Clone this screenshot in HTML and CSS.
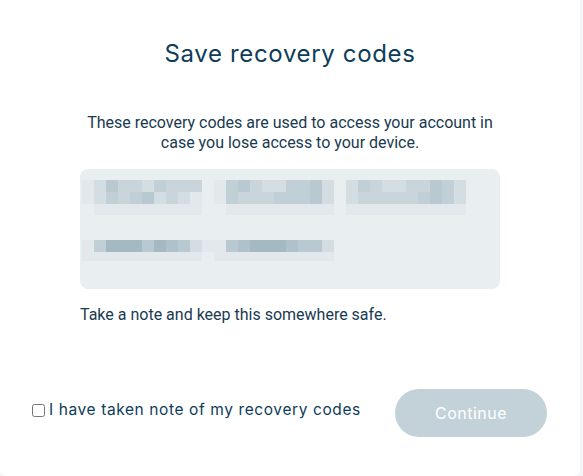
FILE: index.html
```html
<!DOCTYPE html>
<html lang="en">
<head>
<meta charset="utf-8">
<title>Save recovery codes</title>
<link rel="stylesheet" href="styles.css">
</head>
<body>
<div class="card">
  <h1 class="title">Save recovery codes</h1>
  <p class="desc">These recovery codes are used to access your account in<br>case you lose access to your device.</p>
  <div class="codes" aria-label="Recovery codes (hidden)">
    <div class="pix row-a">
      <i class="l1"></i><i class="l2"></i><i class="l5"></i><i class="l3"></i><i class="l3"></i><i class="l2"></i><i class="l4"></i><i class="l3"></i><i class="l3"></i><i class="l3"></i><i class="l0"></i><i class="l1"></i><i class="l4"></i><i class="l5"></i><i class="l3"></i><i class="l2"></i><i class="l2"></i><i class="l4"></i><i class="l4"></i><i class="l5"></i><i class="l2"></i><i class="l0"></i><i class="l2"></i><i class="l4"></i><i class="l3"></i><i class="l2"></i><i class="l2"></i><i class="l3"></i><i class="l3"></i><i class="l5"></i><i class="l4"></i><i class="l2"></i>
      <i class="l1"></i><i class="l2"></i><i class="l4"></i><i class="l3"></i><i class="l4"></i><i class="l5"></i><i class="l2"></i><i class="l3"></i><i class="l2"></i><i class="l1"></i><i class="l0"></i><i class="l1"></i><i class="l4"></i><i class="l3"></i><i class="l3"></i><i class="l3"></i><i class="l4"></i><i class="l4"></i><i class="l4"></i><i class="l5"></i><i class="l2"></i><i class="l0"></i><i class="l2"></i><i class="l3"></i><i class="l3"></i><i class="l3"></i><i class="l3"></i><i class="l3"></i><i class="l4"></i><i class="l5"></i><i class="l4"></i><i class="l2"></i>
      <i class="l0"></i><i class="l1"></i><i class="l1"></i><i class="l1"></i><i class="l1"></i><i class="l1"></i><i class="l1"></i><i class="l1"></i><i class="l1"></i><i class="l1"></i><i class="l0"></i><i class="l0"></i><i class="l1"></i><i class="l1"></i><i class="l1"></i><i class="l1"></i><i class="l1"></i><i class="l1"></i><i class="l1"></i><i class="l1"></i><i class="l1"></i><i class="l0"></i><i class="l1"></i><i class="l1"></i><i class="l1"></i><i class="l1"></i><i class="l1"></i><i class="l1"></i><i class="l1"></i><i class="l1"></i><i class="l1"></i><i class="l1"></i>
    </div>
    <div class="pix row-b">
      <i class="l1"></i><i class="l4"></i><i class="l7"></i><i class="l7"></i><i class="l7"></i><i class="l5"></i><i class="l7"></i><i class="l6"></i><i class="l5"></i><i class="l2"></i><i class="l1"></i><i class="l1"></i><i class="l5"></i><i class="l6"></i><i class="l7"></i><i class="l7"></i><i class="l7"></i><i class="l6"></i><i class="l5"></i><i class="l5"></i><i class="l2"></i>
      <i class="l1"></i><i class="l1"></i><i class="l1"></i><i class="l1"></i><i class="l1"></i><i class="l1"></i><i class="l1"></i><i class="l1"></i><i class="l1"></i><i class="l1"></i><i class="l0"></i><i class="l1"></i><i class="l1"></i><i class="l1"></i><i class="l1"></i><i class="l1"></i><i class="l1"></i><i class="l1"></i><i class="l1"></i><i class="l1"></i><i class="l1"></i>
    </div>
  </div>
  <p class="note">Take a note and keep this somewhere safe.</p>
  <div class="footer">
    <label class="confirm"><input type="checkbox" class="check"><span>I have taken note of my recovery codes</span></label>
    <button class="btn" type="button" disabled>Continue</button>
  </div>
</div>
</body>
</html>
```

FILE: styles.css
```css
html, body {
  margin: 0;
  padding: 0;
}
body {
  background: #f3f5f6;
  width: 583px;
  height: 476px;
  overflow: hidden;
}
.card {
  box-sizing: border-box;
  width: 580px;
  height: 476px;
  background: #ffffff;
  border-radius: 0 0 6px 6px;
  display: flex;
  flex-direction: column;
  padding-bottom: 39px;
}
.title {
  margin: 38px 0 0;
  font-family: Inter, "Open Sans", sans-serif;
  font-weight: 400;
  font-size: 24px;
  line-height: 32px;
  letter-spacing: 0.65px;
  color: #0e3c59;
  text-align: center;
}
.desc {
  margin: 43px 0 0;
  font-family: Roboto, "Liberation Sans", sans-serif;
  font-size: 16px;
  line-height: 20px;
  color: #193a51;
  text-align: center;
}
.codes {
  box-sizing: border-box;
  width: 420px;
  height: 120px;
  margin: 16px 0 0 80px;
  padding: 11px 0 0 2px;
  background: #e9eef1;
  border-radius: 8px;
  display: flex;
  flex-direction: column;
  gap: 25px;
}
.pix {
  display: grid;
  grid-auto-rows: 12px;
}
.row-a {
  width: 384px;
  grid-template-columns: repeat(32, 12px);
  grid-template-rows: 12px 12px 11px;
}
.row-b {
  width: 252px;
  grid-template-columns: repeat(21, 12px);
  grid-template-rows: 12px 9px;
}
.pix i { display: block; }
.l0 { background: #e9eef1; }
.l1 { background: #e2e8eb; }
.l2 { background: #d3dde2; }
.l3 { background: #c9d5db; }
.l4 { background: #c1d0d7; }
.l5 { background: #b8c9d1; }
.l6 { background: #afc1ca; }
.l7 { background: #a5b9c3; }
.note {
  margin: 16px 0 0 80px;
  font-family: Roboto, "Liberation Sans", sans-serif;
  font-size: 16px;
  line-height: 20px;
  color: #193a51;
}
.footer {
  margin-top: auto;
  display: flex;
  align-items: center;
  padding: 0 33px 0 32px;
}
.confirm {
  display: flex;
  align-items: center;
  gap: 4px;
  margin-bottom: 6px;
  font-family: Inter, "Open Sans", sans-serif;
  font-size: 15.5px;
  line-height: 20px;
  letter-spacing: 0.6px;
  color: #0e3c59;
}
.check {
  margin: 0;
  width: 13px;
  height: 13px;
}
.btn {
  margin-left: auto;
  width: 152px;
  height: 48px;
  border: none;
  border-radius: 24px;
  background: #c3d2d9;
  color: #ffffff;
  font-family: Inter, "Open Sans", sans-serif;
  font-size: 16px;
  font-weight: 400;
  letter-spacing: 0.5px;
  padding: 0;
}
```
